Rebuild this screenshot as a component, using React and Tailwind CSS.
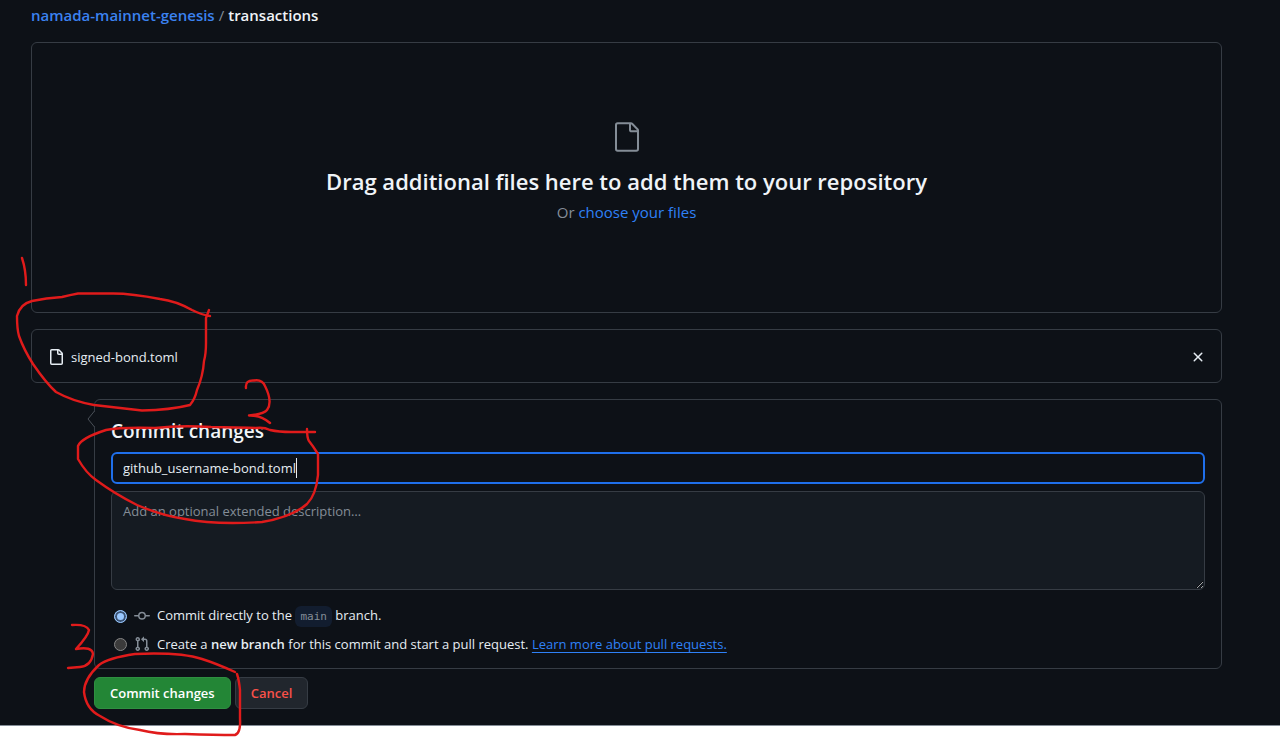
import React from "react";

const filePath =
  "M2 1.75C2 .784 2.784 0 3.75 0h6.586c.464 0 .909.184 1.237.513l2.914 2.914c.329.328.513.773.513 1.237v9.586A1.75 1.75 0 0 1 13.25 16h-9.5A1.75 1.75 0 0 1 2 14.25Zm1.75-.25a.25.25 0 0 0-.25.25v12.5c0 .138.112.25.25.25h9.5a.25.25 0 0 0 .25-.25V6h-2.75A1.75 1.75 0 0 1 9 4.25V1.5Zm6.75.062V4.25c0 .138.112.25.25.25h2.688l-.011-.013-2.914-2.914-.013-.011Z";
const largeFilePath =
  "M3 3a2 2 0 0 1 2-2h9.982a2 2 0 0 1 1.414.586l4.018 4.018A2 2 0 0 1 21 7.018V21a2 2 0 0 1-2 2H5a2 2 0 0 1-2-2Zm2-.5a.5.5 0 0 0-.5.5v18a.5.5 0 0 0 .5.5h14a.5.5 0 0 0 .5-.5V8.5h-4a2 2 0 0 1-2-2v-4Zm10 0v4a.5.5 0 0 0 .5.5h4a.5.5 0 0 0-.146-.336l-4.018-4.018A.5.5 0 0 0 15 2.5Z";
const commitPath =
  "M11.93 8.5a4.002 4.002 0 0 1-7.86 0H.75a.75.75 0 0 1 0-1.5h3.32a4.002 4.002 0 0 1 7.86 0h3.32a.75.75 0 0 1 0 1.5Zm-1.43-.75a2.5 2.5 0 1 0-5 0 2.5 2.5 0 0 0 5 0Z";
const pullRequestPath =
  "M1.5 3.25a2.25 2.25 0 1 1 3 2.122v5.256a2.251 2.251 0 1 1-1.5 0V5.372A2.25 2.25 0 0 1 1.5 3.25Zm5.677-.177L9.573.677A.25.25 0 0 1 10 .854V2.5h1A2.5 2.5 0 0 1 13.5 5v5.628a2.251 2.251 0 1 1-1.5 0V5a1 1 0 0 0-1-1h-1v1.646a.25.25 0 0 1-.427.177L7.177 3.427a.25.25 0 0 1 0-.354ZM3.75 2.5a.75.75 0 1 0 0 1.5.75.75 0 0 0 0-1.5Zm0 9.5a.75.75 0 1 0 0 1.5.75.75 0 0 0 0-1.5Zm8.25.75a.75.75 0 1 0 1.5 0 .75.75 0 0 0-1.5 0Z";
const closePath =
  "M3.72 3.72a.75.75 0 0 1 1.06 0L8 6.94l3.22-3.22a.749.749 0 0 1 1.275.326.749.749 0 0 1-.215.734L9.06 8l3.22 3.22a.749.749 0 0 1-.326 1.275.749.749 0 0 1-.734-.215L8 9.06l-3.22 3.22a.751.751 0 0 1-1.042-.018.751.751 0 0 1-.018-1.042L6.94 8 3.72 4.78a.75.75 0 0 1 0-1.06Z";

function Icon({ path, box = 16, className }) {
  return (
    <svg viewBox={`0 0 ${box} ${box}`} fill="currentColor" aria-hidden="true" className={className}>
      <path d={path} />
    </svg>
  );
}

function Breadcrumb() {
  return (
    <nav className="flex gap-1 pt-[3px] text-[15px] leading-6">
      <a href="#repo" className="font-semibold text-[#3b82f0]">namada-mainnet-genesis</a>
      <span className="text-[#848d97]">/</span>
      <span className="font-semibold text-[#f0f4f8]">transactions</span>
    </nav>
  );
}

function DropZone() {
  return (
    <section className="mt-[15px] flex h-[271px] flex-col items-center rounded-md border border-[#363c44] pt-[78px]">
      <Icon path={largeFilePath} box={24} className="size-8 text-[#848d97]" />
      <h2 className="mt-3 text-[22px] leading-8 font-semibold text-[#f0f4f8]">
        Drag additional files here to add them to your repository
      </h2>
      <p className="mt-[3px] text-[15px] leading-6 text-[#848d97]">
        Or <a href="#choose" className="text-[#2f81f7]">choose your files</a>
      </p>
    </section>
  );
}

function FileRow() {
  return (
    <section className="mt-4 flex h-[54px] items-center rounded-md border border-[#363c44] pt-px pr-[15px] pl-4">
      <Icon path={filePath} className="size-4 text-[#e6edf3]" />
      <span className="ml-[7px] grow">signed-bond.toml</span>
      <button type="button" aria-label="Remove file">
        <Icon path={closePath} className="size-4 text-[#e6edf3]" />
      </button>
    </section>
  );
}

function BranchChoice({ id, checked, icon, children }) {
  return (
    <div className="flex h-7 items-center">
      <input
        type="radio"
        name="branch"
        id={id}
        defaultChecked={checked}
        className="ml-[3px] size-[13px] appearance-none rounded-full border border-[#858585] bg-[#3b3b3b] checked:border-[#99c8ff] checked:bg-[#99c8ff] checked:ring-2 checked:ring-[#3b5374] checked:ring-inset"
      />
      <Icon path={icon} className="ml-[7px] size-4 text-[#848d97]" />
      <label htmlFor={id} className="ml-[7px]">{children}</label>
    </div>
  );
}

function CommitForm() {
  return (
    <section className="relative rounded-md border border-[#363c44] px-4 pt-[15px] pb-2.5">
      <svg viewBox="0 0 10 18" className="absolute top-2.5 -left-2 h-[18px] w-2.5" aria-hidden="true">
        <path d="M8 1L1 9L8 17H10V1Z" fill="#0d1117" />
        <path d="M7.500 1L1 9L7.500 17" fill="none" stroke="#4a5058" />
      </svg>
      <h3 className="text-[19px] leading-8 font-semibold text-[#f0f4f8]">Commit changes</h3>
      <div className="relative mt-[5px]">
        <input
          aria-label="Commit summary"
          defaultValue="github_username-bond.toml"
          className="block h-8 w-full rounded-md border-2 border-[#1f6feb] bg-[#0d1117] px-2.5 outline-none"
        />
        <span className="pointer-events-none absolute inset-y-1.5 left-3 flex" aria-hidden="true">
          <span className="invisible whitespace-pre">github_username-bond.toml</span>
          <span className="w-px bg-[#e6edf3]" />
        </span>
      </div>
      <textarea
        aria-label="Extended description"
        placeholder="Add an optional extended description…"
        className="mt-[7px] block h-[99px] w-full resize-y rounded-md border border-[#363c44] bg-[#151b22] px-[11px] py-[7px] leading-6 outline-none placeholder:text-[#848d97]"
      />
      <div className="mt-3">
        <BranchChoice id="direct" checked icon={commitPath}>
          Commit directly to the{" "}
          <code className="rounded-md bg-[#121d2f] px-[5px] py-1 font-['DejaVu_Sans_Mono',monospace] text-[11px] text-[#848d97]">main</code>{" "}
          branch.
        </BranchChoice>
        <BranchChoice id="pull" icon={pullRequestPath}>
          Create a <strong className="font-semibold">new branch</strong> for this commit and start a pull request.{" "}
          <a href="#learn" className="text-[#2f81f7] underline underline-offset-3">Learn more about pull requests.</a>
        </BranchChoice>
      </div>
    </section>
  );
}

function HandMarks() {
  return (
    <svg
      viewBox="0 0 340 737"
      className="pointer-events-none absolute top-0 left-0 h-[737px] w-[340px]"
      fill="none"
      stroke="#e01b1b"
      strokeWidth="2.4"
      strokeLinecap="round"
      strokeLinejoin="round"
      aria-hidden="true"
    >
      <path d="M22 258Q26 270 26 285" />
      <path d="M210 316Q202 315 192 310Q176 301 160 299Q130 293 110 293.500H78Q70 295 62 297Q46 298 32 301Q20 304 17 316Q17 329 19 336Q24 350 33 364Q46 383 56 392Q72 401 94 405Q120 408 142 410.500Q170 410 190 405Q195 399 197 390Q203 376 204 361Q206 354 206 343V318L209 310" />
      <path d="M246 388Q245 380 254 380.500Q262 379 265 386Q273 402 267 410Q264 414 249 415.500Q261 415 270 423" />
      <path d="M315 432H291Q279 432 270 430Q264 427 256 428Q225 427 211 427Q180 425 155 428Q121 427 106 430Q81 438 78 446V459Q86 473 96 480Q115 494 137 505Q163 516 185 519Q215 525 262 522Q292 517 307 504Q316 495 318 475V454Q313 446 309 441Q307 438 307 429" />
      <path d="M72 625Q86 624 89 630Q88 636 76 649Q92 646 93 654Q91 666 80 667L68 668" />
      <path d="M235 672Q215 663 202 659Q180 652 135 654Q108 658 99 665Q84 679 84 692Q86 709 100 716Q117 727 140 730Q160 735 185 734Q215 735 235 735Q241 733 240 718V690Q239 680 237 674" />
    </svg>
  );
}

export default function App() {
  return (
    <div className="relative bg-white pb-3 font-['Open_Sans','Noto_Sans',sans-serif] text-[13px] leading-5 text-[#e6edf3] [color-scheme:dark]">
      <main className="border-b border-[#848d97] bg-[#0d1117] pr-[58px] pb-4 pl-[31px]">
        <Breadcrumb />
        <DropZone />
        <FileRow />
        <form className="mt-4 ml-[63px]" onSubmit={(event) => event.preventDefault()}>
          <CommitForm />
          <div className="mt-2 flex gap-1">
            <button type="submit" className="h-8 rounded-md border border-[#2f8f41] bg-[#238636] px-[15px] font-semibold text-white">
              Commit changes
            </button>
            <button type="button" className="h-8 rounded-md border border-[#363c44] bg-[#21262d] px-[15px] font-semibold text-[#f85149]">
              Cancel
            </button>
          </div>
        </form>
      </main>
      <HandMarks />
    </div>
  );
}
